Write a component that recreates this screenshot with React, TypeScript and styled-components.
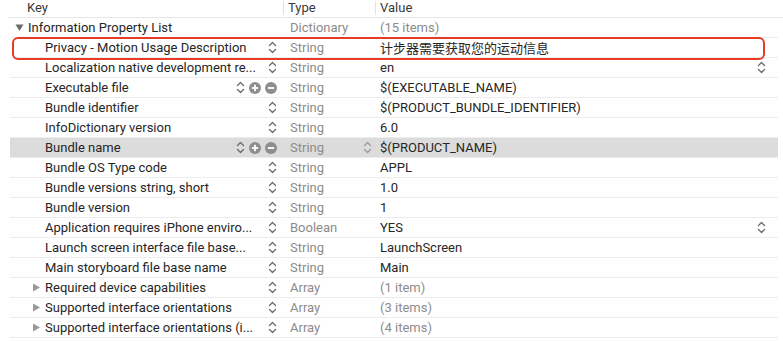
import React from "react";
import styled, { createGlobalStyle } from "styled-components";

const GlobalStyle = createGlobalStyle`
  body {
    margin: 0;
    background: #fff;
    font-family: "Roboto", "Noto Sans CJK SC", sans-serif;
    font-size: 13px;
    color: #262626;
  }
`;

interface IRow {
  keyName: string;
  type: string;
  value: string;
  level: number;
  expander?: "open" | "closed";
  muted?: boolean;
  editing?: boolean;
  selected?: boolean;
  typeStepper?: boolean;
  valueStepper?: boolean;
  noStepper?: boolean;
}

const rows: IRow[] = [
  { keyName: "Information Property List", type: "Dictionary", value: "(15 items)", level: 0, expander: "open", muted: true, noStepper: true },
  { keyName: "Privacy - Motion Usage Description", type: "String", value: "计步器需要获取您的运动信息", level: 1 },
  { keyName: "Localization native development re...", type: "String", value: "en", level: 1, valueStepper: true },
  { keyName: "Executable file", type: "String", value: "$(EXECUTABLE_NAME)", level: 1, editing: true },
  { keyName: "Bundle identifier", type: "String", value: "$(PRODUCT_BUNDLE_IDENTIFIER)", level: 1 },
  { keyName: "InfoDictionary version", type: "String", value: "6.0", level: 1 },
  { keyName: "Bundle name", type: "String", value: "$(PRODUCT_NAME)", level: 1, editing: true, selected: true, typeStepper: true },
  { keyName: "Bundle OS Type code", type: "String", value: "APPL", level: 1 },
  { keyName: "Bundle versions string, short", type: "String", value: "1.0", level: 1 },
  { keyName: "Bundle version", type: "String", value: "1", level: 1 },
  { keyName: "Application requires iPhone enviro...", type: "Boolean", value: "YES", level: 1, valueStepper: true },
  { keyName: "Launch screen interface file base...", type: "String", value: "LaunchScreen", level: 1 },
  { keyName: "Main storyboard file base name", type: "String", value: "Main", level: 1 },
  { keyName: "Required device capabilities", type: "Array", value: "(1 item)", level: 1, expander: "closed", muted: true },
  { keyName: "Supported interface orientations", type: "Array", value: "(3 items)", level: 1, expander: "closed", muted: true },
  { keyName: "Supported interface orientations (i...", type: "Array", value: "(4 items)", level: 1, expander: "closed", muted: true },
];

const Editor = styled.div`
  position: relative;
  width: 783px;
  height: 341px;
  overflow: hidden;
`;

const Header = styled.div`
  display: grid;
  grid-template-columns: 275px 92px 1fr;
  height: 17px;
  margin-left: 8px;
  border-bottom: 1px solid #e6e6e6;
  color: #3a3a3a;
`;

const HeaderCell = styled.div<{ $first?: boolean }>`
  display: flex;
  align-items: center;
  padding-left: ${(p) => (p.$first ? "19px" : "4px")};
  border-left: ${(p) => (p.$first ? "none" : "1px solid #e2e2e2")};
  margin-top: 1px;
  height: 14px;
  line-height: 14px;
`;

const Body = styled.div`
  margin: 0 5px 0 10px;
`;

const Row = styled.div<{ $selected?: boolean }>`
  display: grid;
  grid-template-columns: 273px 92px 1fr;
  height: 19px;
  border-bottom: 1px solid #ececec;
  background: ${(p) => (p.$selected ? "#dcdcdc" : "transparent")};
`;

const KeyCell = styled.div<{ $level: number }>`
  display: flex;
  align-items: center;
  padding-left: ${(p) => (p.$level === 0 ? 5 : 22)}px;
  padding-right: 6px;
  min-width: 0;
`;

const Disclosure = styled.span<{ $open?: boolean }>`
  width: 13px;
  flex: none;
  display: flex;
  align-items: center;
  color: ${(p) => (p.$open ? "#6b6b6b" : "#9a9a9a")};
`;

const KeyText = styled.span`
  flex: 1;
  white-space: nowrap;
  overflow: hidden;
`;

const Controls = styled.span`
  display: flex;
  align-items: center;
  gap: 4px;
  flex: none;
`;

const TypeCell = styled.div`
  display: flex;
  align-items: center;
  justify-content: space-between;
  padding: 0 3px 0 7px;
  color: #8c8c8c;
`;

const ValueCell = styled.div<{ $muted?: boolean }>`
  display: flex;
  align-items: center;
  justify-content: space-between;
  padding: 0 12px 0 5px;
  color: ${(p) => (p.$muted ? "#8c8c8c" : "#262626")};
  white-space: nowrap;
`;

const Highlight = styled.div`
  position: absolute;
  left: 12px;
  top: 37px;
  width: 753px;
  height: 23px;
  box-sizing: border-box;
  border: 2.5px solid #e83a24;
  border-radius: 6px;
  pointer-events: none;
`;

const Stepper: React.FC<{ color?: string }> = ({ color = "#6a6a6a" }) => (
  <svg width="9" height="13" viewBox="0 0 9 13">
    <path d="M1.5 4.5 L4.5 1.5 L7.5 4.5" fill="none" stroke={color} strokeWidth="1.3" strokeLinecap="round" strokeLinejoin="round" />
    <path d="M1.5 8.5 L4.5 11.5 L7.5 8.5" fill="none" stroke={color} strokeWidth="1.3" strokeLinecap="round" strokeLinejoin="round" />
  </svg>
);

const RoundButton: React.FC<{ plus?: boolean }> = ({ plus }) => (
  <svg width="12" height="12" viewBox="0 0 12 12">
    <circle cx="6" cy="6" r="6" fill="#8e8e8e" />
    <rect x="2.8" y="5.1" width="6.4" height="1.8" fill="#fff" />
    {plus && <rect x="5.1" y="2.8" width="1.8" height="6.4" fill="#fff" />}
  </svg>
);

const Triangle: React.FC<{ open?: boolean }> = ({ open }) => (
  <svg width="9" height="9" viewBox="0 0 9 9">
    {open ? <path d="M0.5 1.5 L8.5 1.5 L4.5 8 Z" fill="currentColor" /> : <path d="M1 0.5 L8 4.5 L1 8.5 Z" fill="currentColor" />}
  </svg>
);

export default function App() {
  return (
    <Editor>
      <GlobalStyle />
      <Header>
        <HeaderCell $first>Key</HeaderCell>
        <HeaderCell>Type</HeaderCell>
        <HeaderCell>Value</HeaderCell>
      </Header>
      <Body>
        {rows.map((r, i) => (
          <Row key={i} $selected={r.selected}>
            <KeyCell $level={r.level}>
              {r.expander ? (
                <Disclosure $open={r.expander === "open"}>
                  <Triangle open={r.expander === "open"} />
                </Disclosure>
              ) : (
                <Disclosure />
              )}
              <KeyText>{r.keyName}</KeyText>
              {!r.noStepper && (
                <Controls>
                  <Stepper />
                  {r.editing && <RoundButton plus />}
                  {r.editing && <RoundButton />}
                </Controls>
              )}
            </KeyCell>
            <TypeCell>
              <span>{r.type}</span>
              {r.typeStepper && <Stepper color="#9a9a9a" />}
            </TypeCell>
            <ValueCell $muted={r.muted}>
              <span>{r.value}</span>
              {r.valueStepper && <Stepper />}
            </ValueCell>
          </Row>
        ))}
      </Body>
      <Highlight />
    </Editor>
  );
}
